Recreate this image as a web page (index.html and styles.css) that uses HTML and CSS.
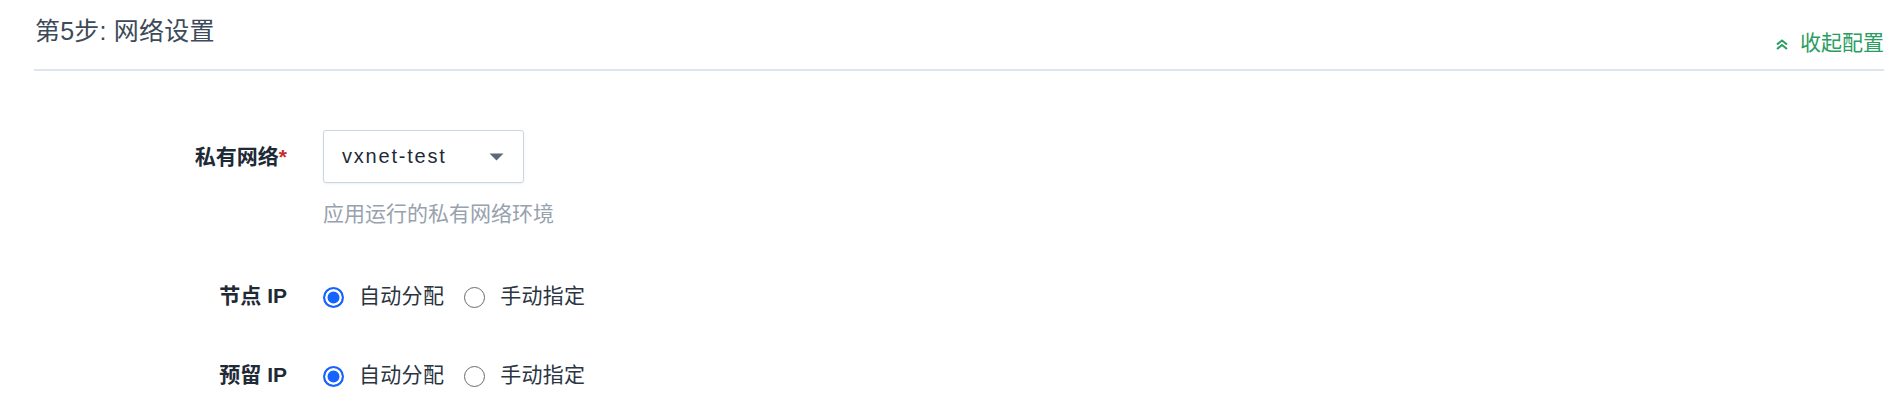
FILE: index.html
```html
<!DOCTYPE html>
<html lang="zh-CN">
<head>
<meta charset="utf-8">
<title>网络设置</title>
<link rel="stylesheet" href="styles.css">
</head>
<body>
<section class="step">
  <header class="step-header">
    <h2 class="step-title">第5步: 网络设置</h2>
    <a class="collapse-link" href="#">
      <svg class="chevrons" width="14" height="11" viewBox="0 0 14 11" aria-hidden="true">
        <path d="M2 5.5 L7 1.5 L12 5.5" fill="none" stroke="currentColor" stroke-width="2"/>
        <path d="M2 10 L7 6 L12 10" fill="none" stroke="currentColor" stroke-width="2"/>
      </svg>
      <span>收起配置</span>
    </a>
  </header>

  <div class="form">
    <div class="row row-vxnet">
      <div class="label">私有网络<span class="req">*</span></div>
      <div class="control">
        <div class="select">
          <span class="select-value">vxnet-test</span>
          <svg class="caret" width="15" height="8" viewBox="0 0 15 8" aria-hidden="true">
            <path d="M0.5 0.5 H14.5 L7.5 7.5 Z" fill="currentColor"/>
          </svg>
        </div>
        <div class="help">应用运行的私有网络环境</div>
      </div>
    </div>

    <div class="row row-radio row-node">
      <div class="label">节点 IP</div>
      <div class="control radios">
        <label class="radio"><span class="dot checked"></span><span>自动分配</span></label>
        <label class="radio"><span class="dot"></span><span>手动指定</span></label>
      </div>
    </div>

    <div class="row row-radio row-reserve">
      <div class="label">预留 IP</div>
      <div class="control radios">
        <label class="radio"><span class="dot checked"></span><span>自动分配</span></label>
        <label class="radio"><span class="dot"></span><span>手动指定</span></label>
      </div>
    </div>
  </div>
</section>
</body>
</html>
```

FILE: styles.css
```css
* {
  box-sizing: border-box;
}

html, body {
  margin: 0;
  padding: 0;
  background: #ffffff;
}

body {
  font-family: "Liberation Sans", "Noto Sans CJK SC", sans-serif;
  color: #2b3441;
}

.step {
  width: 1896px;
}

.step-header {
  display: flex;
  justify-content: space-between;
  align-items: flex-start;
  height: 71px;
  margin: 0 12px 0 34px;
  padding-top: 19px;
  border-bottom: 2px solid #dde5ee;
}

.step-title {
  margin: 0 0 0 1px;
  font-size: 25px;
  line-height: 25px;
  font-weight: 400;
  color: #3d4a5a;
  letter-spacing: 0.2px;
}

.collapse-link {
  display: flex;
  align-items: center;
  gap: 11px;
  margin-top: 12px;
  font-size: 21px;
  line-height: 24px;
  color: #2a9d62;
  text-decoration: none;
}

.chevrons {
  display: block;
  margin-top: 2px;
}

.form {
  padding-top: 59px;
}

.row {
  display: grid;
  grid-template-columns: 287px 1fr;
  column-gap: 36px;
  align-items: start;
}

.label {
  text-align: right;
  font-size: 21px;
  font-weight: 700;
  color: #1f2a37;
}

.row-vxnet .label {
  line-height: 53px;
}

.req {
  color: #c62a2a;
}

.select {
  display: flex;
  align-items: center;
  justify-content: space-between;
  width: 201px;
  height: 53px;
  padding: 0 19px 0 18px;
  border: 1px solid #cdd6e0;
  border-radius: 3px;
  box-shadow: 0 1px 2px rgba(40, 60, 90, 0.08);
  background: #fff;
}

.select-value {
  font-size: 20px;
  letter-spacing: 1.8px;
  color: #1f2a37;
}

.caret {
  display: block;
  color: #5b6878;
  margin-top: 1px;
}

.help {
  margin-top: 17px;
  font-size: 21px;
  line-height: 28px;
  color: #98a2ae;
}

.row-radio .label,
.row-radio .control {
  line-height: 40px;
}

.row-node {
  margin-top: 48px;
}

.row-reserve {
  margin-top: 39px;
}

.radios {
  display: flex;
  align-items: center;
  gap: 20px;
}

.radio {
  display: flex;
  align-items: center;
  gap: 15px;
  font-size: 21px;
  letter-spacing: 0.3px;
  color: #2b3441;
}

.dot {
  display: block;
  width: 21px;
  height: 21px;
  border-radius: 50%;
  border: 1.5px solid #6a6a6a;
  background: #fff;
  margin-top: 2px;
}

.dot.checked {
  border: 2px solid #1763ff;
  background: #1763ff;
  box-shadow: inset 0 0 0 2.5px #ffffff;
}
```
